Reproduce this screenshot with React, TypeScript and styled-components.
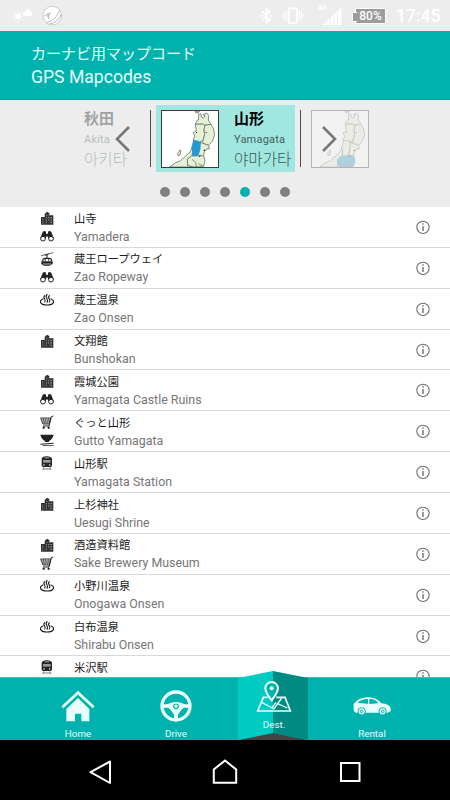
import React from 'react';
import styled, { createGlobalStyle } from 'styled-components';

const TEAL = '#00b2ad';

const Global = createGlobalStyle`
  * { box-sizing: border-box; }
  body { margin: 0; background: #fff; }
  svg { display: block; flex: none; }
`;

const Screen = styled.div`
  width: 450px;
  height: 800px;
  display: flex;
  flex-direction: column;
  overflow: hidden;
  background: #fff;
  font-family: Roboto, "Noto Sans CJK JP", sans-serif;
`;

/* ---------- status bar ---------- */
const StatusBar = styled.div`
  height: 31px;
  flex: none;
  display: flex;
  justify-content: space-between;
  background: #ededed;
`;
const Clock = styled.span`
  width: 46px;
  margin-left: 10px;
  margin-right: 8px;
  font-size: 17.5px;
  font-weight: 500;
  line-height: 33px;
  color: #fff;
  white-space: nowrap;
`;
const StatusGroup = styled.div`
  display: flex;
`;
const Battery = styled.span`
  position: relative;
  width: 31px;
  height: 16px;
  margin: 8px 0 0 9px;
  border: 1px solid #fff;
  background: #9c9c9c;
  color: #fff;
  font-size: 12px;
  font-weight: 500;
  line-height: 14px;
  text-align: center;
  &::before {
    content: '';
    position: absolute;
    left: -4px;
    top: 3px;
    width: 4px;
    height: 8px;
    border: 1px solid #fff;
    border-right: 0;
    background: #9c9c9c;
  }
`;

/* ---------- header ---------- */
const Header = styled.header`
  height: 69px;
  flex: none;
  padding: 12px 31px 0;
  background: ${TEAL};
  border-bottom: 1px solid #109b97;
  color: #e4fffd;
`;
const TitleJa = styled.div`
  font-size: 15px;
  line-height: 22px;
`;
const TitleEn = styled.div`
  font-size: 17.6px;
  line-height: 24px;
`;

/* ---------- prefecture carousel ---------- */
const Carousel = styled.section`
  height: 107px;
  flex: none;
  padding-top: 5px;
  background: #ededed;
  position: relative;
`;
const Slides = styled.div`
  display: flex;
  height: 67px;
`;
const Slide = styled.div`
  display: flex;
  width: 150px;
  flex: none;
`;
const Divider = styled.i`
  width: 1px;
  height: 57px;
  margin-top: 5px;
  flex: none;
  background: #55494f;
`;
const Card = styled.div<{ $active?: boolean }>`
  width: 139px;
  height: 67px;
  margin-left: 5px;
  padding: 5px 0 0 5px;
  display: flex;
  flex: none;
  background: ${p => (p.$active ? '#a0e7e0' : 'transparent')};
  opacity: ${p => (p.$active ? 1 : 0.32)};
`;
const Names = styled.div`
  margin-left: 15px;
  white-space: nowrap;
`;
const LoneNames = styled(Names)`
  margin-left: 74px;
`;
const NameJa = styled.div`
  font-size: 15px;
  font-weight: 700;
  line-height: 18px;
  color: #000;
`;
const NameEn = styled.div`
  font-size: 11px;
  letter-spacing: 0.2px;
  line-height: 15px;
  margin-top: 4px;
  color: #45605e;
`;
const NameKo = styled.div`
  font-family: "Noto Sans CJK KR", sans-serif;
  font-size: 15.6px;
  font-weight: 300;
  line-height: 19px;
  margin-top: 2px;
  color: #3f5956;
`;
const Arrow = styled.button<{ $x: number }>`
  position: absolute;
  left: ${p => p.$x}px;
  top: 25px;
  border: 0;
  padding: 0;
  background: none;
`;
const Dots = styled.div`
  display: flex;
  gap: 10px;
  justify-content: center;
  margin-top: 15.4px;
`;
const Dot = styled.i<{ $on: boolean }>`
  width: 10px;
  height: 10px;
  border-radius: 50%;
  background: ${p => (p.$on ? TEAL : '#808080')};
`;

/* ---------- list ---------- */
const List = styled.ul`
  list-style: none;
  margin: 0;
  padding: 0;
  height: 471px;
  flex: none;
  overflow: hidden;
`;
const Row = styled.li`
  height: 40.86px;
  display: flex;
  border-bottom: 1px solid #d9d9d9;
`;
const Icons = styled.div`
  width: 34px;
  margin-left: 40px;
  padding-top: 4px;
  display: flex;
  flex-direction: column;
  gap: 4px;
`;
const Labels = styled.div`
  flex: 1;
  white-space: nowrap;
`;
const PlaceJa = styled.div`
  margin-top: 4.5px;
  font-size: 11.25px;
  line-height: 16px;
  color: #1c1c1c;
`;
const PlaceEn = styled.div`
  margin-top: 1px;
  font-size: 12.4px;
  line-height: 16px;
  color: #767676;
`;
const Info = styled.div`
  width: 34px;
  padding-top: 13px;
`;

/* ---------- tab bar ---------- */
const TabBar = styled.nav`
  height: 62px;
  flex: none;
  display: grid;
  grid-template-columns: 29px 98px 98px 98px 98px 29px;
  background: ${TEAL};
  box-shadow: 0 -1px 0 #4fb9b4;
  position: relative;
`;
const Tab = styled.div<{ $col: number; $raised?: boolean }>`
  grid-column: ${p => p.$col};
  position: relative;
  padding-top: ${p => (p.$raised ? 2 : 11)}px;
  display: flex;
  flex-direction: column;
  align-items: center;
  color: #e6fffd;
`;
const TabLabel = styled.span`
  position: relative;
  margin-top: 5px;
  font-size: 9.8px;
  line-height: 12px;
`;
const Fold = styled.svg`
  position: absolute;
  left: 11px;
  top: -7px;
`;
const TabIcon = styled.svg`
  position: relative;
`;

/* ---------- system navigation ---------- */
const SystemNav = styled.nav`
  height: 60px;
  flex: none;
  display: flex;
  justify-content: space-between;
  padding: 0 79px;
  background: #000;
`;

type Kind = 'building' | 'view' | 'ropeway' | 'onsen' | 'cart' | 'food' | 'train';

const Glyph = ({ kind }: { kind: Kind }) => {
  const shapes: Record<Kind, React.ReactNode> = {
    building: (
      <>
        <path d="M3 41V18H14V9L21 2L28 6V13H40V41Z" fill="#303030" />
        <path d="M7 24h3M7 30h3M7 36h3M18 13h2M23 13h2M18 20h3M24 20h3M31 20h5M18 27h3M24 27h3M31 27h5M18 34h3M31 34h5" stroke="#ddd" strokeWidth="2" />
        <path d="M15 19V41M28 13V41" stroke="#666" strokeWidth="1" />
      </>
    ),
    view: (
      <g>
        <path d="M0 29L8 9Q13 3 18 8V14H24V8Q29 3 34 9L42 29L28 32L22 22H20L14 32Z" fill="#222" />
        <circle cx="9" cy="29" r="7" fill="#fff" stroke="#222" strokeWidth="3" />
        <circle cx="33" cy="29" r="7" fill="#fff" stroke="#222" strokeWidth="3" />
      </g>
    ),
    ropeway: (
      <g fill="none" stroke="#222">
        <path d="M3 11L40 2" strokeWidth="2" />
        <path d="M14 9h8l4-4M21 8V20" strokeWidth="3" />
        <path d="M8 28Q8 19 16 19H28Q35 19 35 28" strokeWidth="3.4" />
        <path d="M16 20V28M26 20V28" strokeWidth="2.4" />
        <path d="M4 28H38V34Q34 41 28 41H13Q6 41 4 34Z" fill="#222" stroke="none" />
        <path d="M9 36H33" stroke="#fff" strokeWidth="2" />
      </g>
    ),
    onsen: (
      <g fill="none" stroke="#1c1c1c" strokeLinecap="round">
        <path d="M9 18C-3 22 -2 36 21 36S45 22 33 18" strokeWidth="3.6" />
        <path d="M14 8Q9 13 14 18Q17 23 14 27M21 4Q16 11 21 17Q24 22 21 28M28 8Q23 13 28 18Q31 23 28 27" strokeWidth="3.2" />
      </g>
    ),
    cart: (
      <g fill="none" stroke="#222">
        <path d="M2 9H32L28 27H9Z" strokeWidth="2.8" />
        <path d="M5 15H31M7 21H30M10 9L13 27M17 9L18 27M25 9L23 27" strokeWidth="2" />
        <path d="M40 3L34 5L27 33H9" strokeWidth="3" />
        <circle cx="11" cy="38" r="3" fill="#222" />
        <circle cx="26" cy="38" r="3" fill="#222" />
      </g>
    ),
    food: (
      <g fill="#222">
        <path d="M1 5H41Q38 18 27 24V27H15V24Q4 18 1 5Z" />
        <path d="M1 32L41 29V32L1 35ZM8 36H41V38H8Z" />
      </g>
    ),
    train: (
      <g>
        <path d="M5 9Q6 1 20 1Q34 1 36 9V28Q36 33 31 33H10Q5 33 5 28Z" fill="#252525" />
        <path d="M14 5.5H27" stroke="#eee" strokeWidth="2" />
        <path d="M9 20V12H32V20Z" fill="#9a9a9a" />
        <circle cx="12" cy="27" r="2.2" fill="#fff" />
        <circle cx="29" cy="27" r="2.2" fill="#fff" />
        <path d="M12 34L8 42M29 34L33 42M10 39H31" fill="none" stroke="#333" strokeWidth="2" />
      </g>
    ),
  };
  return <svg width="14" height="14" viewBox="0 0 42 42">{shapes[kind]}</svg>;
};

const TohokuMap = ({ region }: { region: 'yamagata' | 'fukushima' }) => {
  const blue = '#2797d1';
  const land = '#e5f0d7';
  return (
    <svg width="58" height="58" viewBox="0 0 174 174">
      <rect x="1.5" y="1.5" width="171" height="171" fill="#fff" />
      <g stroke="#66756a" strokeWidth="2.4" strokeLinejoin="round" fill={land}>
        <path d="M102 3L110 5L116 2L112 9L104 8Z" />
        <path d="M103 43L108 31L113 29L112 14L119 11L122 22L128 24L132 17L126 14L137 9L143 16L142 30L150 43L132 46L125 42Z" />
        <path d="M103 43L125 42L132 46L129 60L131 73L126 91L113 97L96 91L101 79L97 68L106 62Z" />
        <path d="M132 46L150 43L157 55L161 74L154 94L143 106L125 100L126 91L131 73L129 60Z" />
        <path d="M117 97L125 100L143 106L145 117L137 116L130 126L127 140L110 136L116 121Z" />
        <path d="M79 147L93 135L112 135L128 138L132 151L128 169L97 171L80 167Z" fill={region === 'fukushima' ? blue : land} />
        <path d="M26 171L42 159L59 152L75 137L87 126L94 112L96 130L92 138L79 147L80 167L97 171Z" />
        <path d="M98 91L113 94L118 98L116 121L110 138L94 138L95 122L92 114Z" fill={region === 'yamagata' ? blue : land} stroke={region === 'yamagata' ? blue : '#66756a'} />
        <path d="M50 130L57 120L60 122L57 135L51 137Z" />
        <path d="M106 171L104 157L93 148M126 168L112 161" fill="none" />
      </g>
      <path d="M105 66h3v3h-3zM134 66h3v3h-3zM128 119h4v4h-4zM114 137h4v4h-4z" fill="#222" />
      <rect x="1.5" y="1.5" width="171" height="171" fill="none" stroke="#3c3c3c" strokeWidth="3" />
    </svg>
  );
};

const places: { ja: string; en?: string; icons: Kind[] }[] = [
  { ja: '山寺', en: 'Yamadera', icons: ['building', 'view'] },
  { ja: '蔵王ロープウェイ', en: 'Zao Ropeway', icons: ['ropeway', 'view'] },
  { ja: '蔵王温泉', en: 'Zao Onsen', icons: ['onsen'] },
  { ja: '文翔館', en: 'Bunshokan', icons: ['building'] },
  { ja: '霞城公園', en: 'Yamagata Castle Ruins', icons: ['building', 'view'] },
  { ja: 'ぐっと山形', en: 'Gutto Yamagata', icons: ['cart', 'food'] },
  { ja: '山形駅', en: 'Yamagata Station', icons: ['train'] },
  { ja: '上杉神社', en: 'Uesugi Shrine', icons: ['building'] },
  { ja: '酒造資料館', en: 'Sake Brewery Museum', icons: ['building', 'cart'] },
  { ja: '小野川温泉', en: 'Onogawa Onsen', icons: ['onsen'] },
  { ja: '白布温泉', en: 'Shirabu Onsen', icons: ['onsen'] },
  { ja: '米沢駅', icons: ['train'] },
];

export default function App() {
  return (
    <Screen>
      <Global />
      <StatusBar>
        <svg width="70" height="31" viewBox="0 0 210 93">
          <g fill="#fff" stroke="#fff">
            <circle cx="54" cy="49" r="9" />
            <path d="M54 31v5M54 62v6M36 49h5M67 49h4M41 36l4 4M67 36l-4 4M41 62l4-4M67 62l-4-4" strokeWidth="2.5" />
            <path d="M75 48Q67 47 69 40Q71 35 76 36Q77 27 84 27Q91 27 92 35Q97 37 96 43Q95 48 90 48Z" />
          </g>
          <circle cx="157" cy="47" r="28" fill="#fff" stroke="#c4c4c4" strokeWidth="2.5" />
          <path d="M139 68Q169 61 179 30M147 73Q178 65 184 42M133 48L151 39L142 52M143 40L147 57" fill="none" stroke="#b8b8b8" strokeWidth="3" />
        </svg>
        <StatusGroup>
          <svg width="92" height="31" viewBox="0 0 276 93">
            <path d="M25 34L48 59L37 69V25L48 35L25 60M21 47h5M49 47h5" fill="none" stroke="#fff" strokeWidth="4.5" />
            <rect x="104" y="25" width="25" height="44" rx="3" fill="none" stroke="#fff" strokeWidth="5" />
            <path d="M92 34V60M97 30V64M136 30V64M142 34V60M86 42V52M148 42V52" fill="none" stroke="#fff" strokeWidth="3" />
            <path d="M205 76L216 66V76ZM219 76V63L227 55V76ZM230 76V52L238 44V76ZM241 76V41L249 33V76ZM252 76V30L262 22V76Z" fill="#fff" />
            <text x="191" y="30" fontSize="22" fontWeight="700" fill="#fff">4G</text>
          </svg>
          <Battery>80%</Battery>
          <Clock>17:45</Clock>
        </StatusGroup>
      </StatusBar>

      <Header>
        <TitleJa>カーナビ用マップコード</TitleJa>
        <TitleEn>GPS Mapcodes</TitleEn>
      </Header>

      <Carousel>
        <Slides>
          <Slide>
            <Card>
              <LoneNames>
                <NameJa>秋田</NameJa>
                <NameEn>Akita</NameEn>
                <NameKo>아키타</NameKo>
              </LoneNames>
            </Card>
          </Slide>
          <Slide>
            <Divider />
            <Card $active>
              <TohokuMap region="yamagata" />
              <Names>
                <NameJa>山形</NameJa>
                <NameEn>Yamagata</NameEn>
                <NameKo>야마가타</NameKo>
              </Names>
            </Card>
          </Slide>
          <Slide>
            <Divider />
            <Card>
              <TohokuMap region="fukushima" />
            </Card>
          </Slide>
        </Slides>
        <Arrow $x={114} aria-label="Previous">
          <svg width="17" height="28" viewBox="0 0 17 28"><path d="M15 2L3 14L15 26" fill="none" stroke="#777" strokeWidth="2.6" /></svg>
        </Arrow>
        <Arrow $x={321} aria-label="Next">
          <svg width="17" height="28" viewBox="0 0 17 28"><path d="M2 2L14 14L2 26" fill="none" stroke="#777" strokeWidth="2.6" /></svg>
        </Arrow>
        <Dots>
          {[0, 1, 2, 3, 4, 5, 6].map(i => <Dot key={i} $on={i === 4} />)}
        </Dots>
      </Carousel>

      <List>
        {places.map(p => (
          <Row key={p.ja}>
            <Icons>{p.icons.map(k => <Glyph key={k} kind={k} />)}</Icons>
            <Labels>
              <PlaceJa>{p.ja}</PlaceJa>
              {p.en && <PlaceEn>{p.en}</PlaceEn>}
            </Labels>
            <Info>
              <svg width="15" height="15" viewBox="0 0 45 45">
                <circle cx="21" cy="22" r="18.5" fill="none" stroke="#6d6d6d" strokeWidth="3.2" />
                <path d="M21 18V33" fill="none" stroke="#555" strokeWidth="3.6" />
                <circle cx="21" cy="12" r="2.5" fill="#555" />
              </svg>
            </Info>
          </Row>
        ))}
      </List>

      <TabBar>
        <Tab $col={2}>
          <TabIcon width="34" height="34" viewBox="0 0 102 102">
            <path d="M4 55L51 11L98 55" fill="none" stroke="#e8fffd" strokeWidth="8" />
            <path d="M16 60L51 27L85 60V97H61V74H42V97H16Z" fill="#e8fffd" />
          </TabIcon>
          <TabLabel>Home</TabLabel>
        </Tab>
        <Tab $col={3}>
          <TabIcon width="34" height="34" viewBox="0 0 102 102">
            <circle cx="51" cy="51" r="42" fill="none" stroke="#e8fffd" strokeWidth="10" />
            <path d="M9 46H25Q51 32 77 46H93V56H77Q68 58 62 70L57 77V94H45V77L40 70Q34 58 25 56H9Z" fill="#e8fffd" />
            <circle cx="51" cy="52" r="7" fill="none" stroke={TEAL} strokeWidth="3.5" />
          </TabIcon>
          <TabLabel>Drive</TabLabel>
        </Tab>
        <Tab $col={4} $raised>
          <Fold width="74" height="69" viewBox="0 0 74 69">
            <path d="M2 69L37 62L72 69Z" fill="#444" />
            <path d="M2 7L37 0V62L2 69Z" fill="#00cbc2" />
            <path d="M37 0L72 7V69L37 62Z" fill="#008a84" />
          </Fold>
          <TabIcon width="36" height="34" viewBox="0 0 108 102">
            <path d="M35 52H22L5 93H103L87 52H61" fill="none" stroke="#e8fffd" strokeWidth="5" />
            <path d="M17 67L54 87L77 54M63 70L94 84M48 84L60 67" fill="none" stroke="#e8fffd" strokeWidth="4" />
            <path d="M47 61Q28 37 28 25A19 19 0 0 1 66 25Q66 37 47 61Z" fill="#00b2ad" stroke="#e8fffd" strokeWidth="6" />
            <circle cx="47" cy="25" r="6" fill="#e8fffd" />
          </TabIcon>
          <TabLabel>Dest.</TabLabel>
        </Tab>
        <Tab $col={5}>
          <TabIcon width="40" height="34" viewBox="0 0 120 102">
            <path d="M5 56Q3 43 10 40Q20 26 47 25Q73 24 88 43Q111 45 116 56V66L107 71H12Q3 68 5 56Z" fill="#e8fffd" />
            <path d="M17 42Q25 31 48 30V44ZM52 30Q68 29 80 43L52 45Z" fill={TEAL} />
            <circle cx="29" cy="67" r="11" fill="#e8fffd" stroke={TEAL} strokeWidth="3" />
            <circle cx="29" cy="67" r="4" fill="none" stroke={TEAL} strokeWidth="3" />
            <circle cx="92" cy="67" r="11" fill="#e8fffd" stroke={TEAL} strokeWidth="3" />
            <circle cx="92" cy="67" r="4" fill="none" stroke={TEAL} strokeWidth="3" />
          </TabIcon>
          <TabLabel>Rental</TabLabel>
        </Tab>
      </TabBar>

      <SystemNav>
        <svg width="42" height="60" viewBox="0 0 42 60">
          <path d="M31 21.5V43L11.5 32.2Z" fill="none" stroke="#fff" strokeWidth="2" strokeLinejoin="round" />
        </svg>
        <svg width="42" height="60" viewBox="0 0 42 60">
          <path d="M9.8 42.8V29.5L21 20.5L32.2 29.5V42.8Z" fill="none" stroke="#fff" strokeWidth="2" />
        </svg>
        <svg width="42" height="60" viewBox="0 0 42 60">
          <rect x="12" y="23" width="18.5" height="18" fill="none" stroke="#fff" strokeWidth="2" />
        </svg>
      </SystemNav>
    </Screen>
  );
}
